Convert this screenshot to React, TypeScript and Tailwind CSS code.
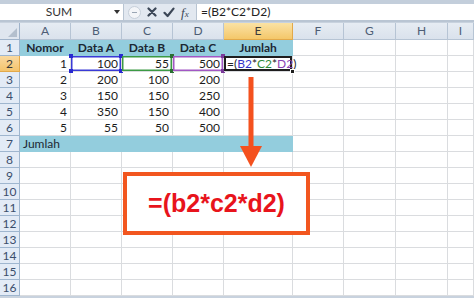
import React from 'react';

const colLetters = ['A', 'B', 'C', 'D', 'E', 'F', 'G', 'H', 'I'];
const headers = ['Nomor', 'Data A', 'Data B', 'Data C', 'Jumlah'];
const data = [
  ['1', '100', '55', '500'],
  ['2', '200', '100', '200'],
  ['3', '150', '150', '250'],
  ['4', '350', '150', '400'],
  ['5', '55', '50', '500'],
];

// little square handles on the reference range borders
const Handle: React.FC<{ className: string }> = ({ className }) => (
  <span className={`absolute w-[4px] h-[4px] ${className}`} />
);

const Formula: React.FC = () => (
  <span>
    <span className="text-[#222]">=(</span>
    <span className="text-[#3434c8]">B2</span>
    <span className="text-[#222]">*</span>
    <span className="text-[#2f8a3a]">C2</span>
    <span className="text-[#222]">*</span>
    <span className="text-[#8a44b4]">D2</span>
    <span className="text-[#222]">)</span>
  </span>
);

const renderCell = (row: number, col: number) => {
  const base = 'h-[16px] border-r border-b text-[12px] leading-[15px] px-[3px] whitespace-nowrap';
  const key = `${row}-${col}`;

  if ((row === 1 || row === 7) && col <= 4) {
    const text = row === 1 ? headers[col] : col === 0 ? 'Jumlah' : '';
    return (
      <div
        key={key}
        className={`${base} bg-[#93cddd] border-[#93cddd] text-[#1c2733] ${row === 1 ? 'font-bold text-center' : 'text-left'}`}
      >
        {text}
      </div>
    );
  }

  if (row >= 2 && row <= 6 && col <= 3) {
    const value = data[row - 2][col];
    let extra = '';
    let handles: React.ReactNode = null;
    if (row === 2 && col === 1) {
      extra = 'relative shadow-[inset_0_0_0_1.5px_#3a3ad6]';
      handles = (
        <>
          <Handle className="bg-[#2828d0] -left-[2px] -top-[2px]" />
          <Handle className="bg-[#2828d0] -right-[2px] -top-[2px]" />
          <Handle className="bg-[#2828d0] -left-[2px] -bottom-[2px]" />
          <Handle className="bg-[#2828d0] -right-[2px] -bottom-[2px]" />
        </>
      );
    }
    if (row === 2 && col === 2) {
      extra = 'relative shadow-[inset_0_0_0_1.5px_#3c9a44]';
      handles = (
        <>
          <Handle className="bg-[#2a6e32] -right-[2px] -top-[2px]" />
          <Handle className="bg-[#2a6e32] -right-[2px] -bottom-[2px]" />
        </>
      );
    }
    if (row === 2 && col === 3) {
      extra = 'relative shadow-[inset_0_0_0_1.5px_#a257c4]';
      handles = (
        <>
          <Handle className="bg-[#7a3a9a] -right-[2px] -top-[2px]" />
          <Handle className="bg-[#7a3a9a] -right-[2px] -bottom-[2px]" />
        </>
      );
    }
    return (
      <div key={key} className={`${base} bg-white border-[#dadcdf] text-right text-[#1c1c1c] ${extra}`}>
        {value}
        {handles}
      </div>
    );
  }

  if (row === 2 && col === 4) {
    return (
      <div
        key={key}
        className={`${base} relative bg-white border-[#dadcdf] text-left shadow-[inset_0_0_0_2px_#1e1e1e]`}
      >
        <Formula />
        <span className="absolute -right-[3px] -bottom-[3px] w-[5px] h-[5px] bg-[#1e1e1e] border border-white" />
      </div>
    );
  }

  return <div key={key} className={`${base} bg-white border-[#dadcdf]`} />;
};

const App: React.FC = () => {
  const rows = Array.from({ length: 16 }, (_, i) => i + 1);

  return (
    <div className="relative w-[474px] h-[298px] overflow-hidden bg-[#c8d2de] font-['Lato','Liberation_Sans',sans-serif]">
      {/* formula bar */}
      <div className="h-[4px] bg-[#c3cedb]" />
      <div className="flex h-[18px] bg-[#e2e8f0] border-b-[2px] border-[#b9c5d3] text-[12px] text-[#222]">
        <div className="flex w-[124px] bg-white items-center border-r border-[#b8c4d2]">
          <span className="flex-1 text-center pl-[4px] text-[#333]">SUM</span>
          <span className="mr-[3px] w-0 h-0 border-l-[3px] border-r-[3px] border-t-[4px] border-l-transparent border-r-transparent border-t-[#333]" />
        </div>
        <div className="w-[72px] flex items-center pl-[4px] gap-[6px]">
          <div className="w-[13px] h-[13px] rounded-full bg-[#f3f5f8] border border-[#c6cfda] flex items-center justify-center">
            <span className="block w-[5px] h-[1px] bg-[#9aa6b4]" />
          </div>
          <svg width="10" height="10" viewBox="0 0 10 10">
            <path d="M1.5 1.5 L8.5 8.5 M8.5 1.5 L1.5 8.5" stroke="#3c4757" strokeWidth="2.2" strokeLinecap="round" />
          </svg>
          <svg width="12" height="11" viewBox="0 0 12 11">
            <path d="M1.5 5.8 L4.6 9 L10.5 1.6" stroke="#3c4757" strokeWidth="2.2" fill="none" strokeLinecap="round" strokeLinejoin="round" />
          </svg>
          <span className="font-['Liberation_Serif',serif] italic text-[13px] text-[#3c4757] leading-none">
            f<span className="text-[9px]">x</span>
          </span>
        </div>
        <div className="flex-1 bg-white flex items-center pl-[4px] border-l border-[#b8c4d2]">=(B2*C2*D2)</div>
      </div>

      {/* sheet */}
      <div className="mt-[1px] grid grid-cols-[20px_51px_51px_51px_51px_69px_51px_52px_52px_26px]">
        <div className="flex items-end justify-end p-[2px] h-[17px] bg-[#dfe6ef] border-r border-b border-[#9fb3ca]">
          <svg width="9" height="9" viewBox="0 0 9 9">
            <path d="M9 0 L9 9 L0 9 Z" fill="#b3bfcd" />
          </svg>
        </div>
        {colLetters.map((l) => (
          <div
            key={l}
            className={`h-[17px] border-r border-b text-[12px] leading-[16px] text-center ${
              l === 'E'
                ? 'bg-gradient-to-b from-[#fae2a4] to-[#f4c769] border-[#e2a94a] text-[#3c3c3c]'
                : 'bg-gradient-to-b from-[#e6ecf3] to-[#dae2ec] border-[#b6c4d4] text-[#4d5d75]'
            }`}
          >
            {l}
          </div>
        ))}
        {rows.map((r) => (
          <React.Fragment key={r}>
            <div
              className={`h-[16px] border-r border-b text-[12px] leading-[15px] text-center ${
                r === 2
                  ? 'bg-gradient-to-b from-[#fad9a0] to-[#f4c46c] border-[#e2a94a] text-[#3a3a3a]'
                  : 'bg-[#e3ebf6] border-[#9fb6cf] text-[#3a4e6c]'
              }`}
            >
              {r}
            </div>
            {colLetters.map((_, c) => renderCell(r, c))}
          </React.Fragment>
        ))}
      </div>

      {/* orange arrow */}
      <svg width="22" height="90" viewBox="0 0 22 90" className="absolute left-[240px] top-[77px]">
        <rect x="8.5" y="0" width="5" height="70" fill="#f4511e" />
        <path d="M0 69 L22 69 L11 90 Z" fill="#f4511e" />
      </svg>

      {/* callout box */}
      <div className="absolute left-[123px] top-[172px] w-[187px] h-[63px] border-[4px] border-[#f2561f] bg-white flex items-center justify-center">
        <span className="font-['Liberation_Sans',sans-serif] font-bold text-[25px] leading-none text-[#e8141c]">=(b2*c2*d2)</span>
      </div>
    </div>
  );
};

export default App;
